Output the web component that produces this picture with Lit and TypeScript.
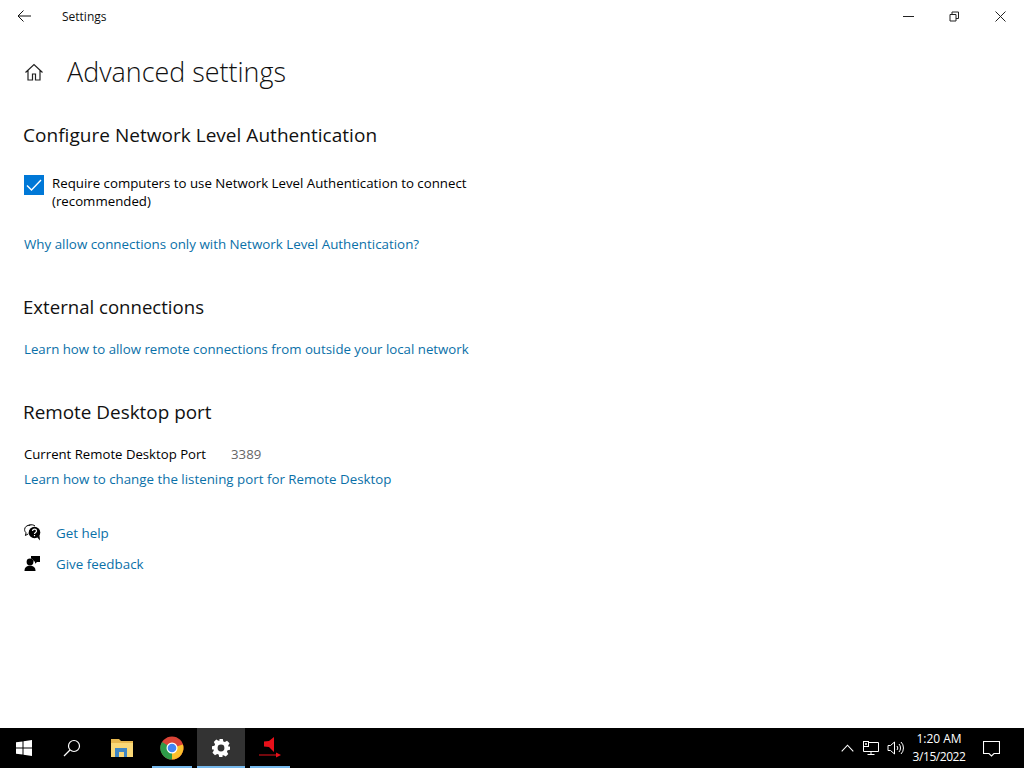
import { LitElement, html, css } from "lit";
import { customElement } from "lit/decorators.js";

@customElement("app-root")
export class AppRoot extends LitElement {
  static styles = css`
    :host { display: flex; flex-direction: column; width: 1024px; height: 768px; overflow: hidden; background: #fff; color: #000; font-family: "Open Sans", "Noto Sans", sans-serif; font-size: 14px; }
    svg { display: block; }
    .titlebar { display: flex; align-items: center; height: 32px; flex: none; }
    .back { width: 48px; display: flex; justify-content: center; }
    .apptitle { font-size: 12px; margin-left: 14px; color: #111; }
    .spacer { flex: 1; }
    .winbtns { display: flex; margin-right: 1px; }
    .winbtn { width: 46px; height: 32px; display: flex; align-items: center; justify-content: center; }
    .main { flex: 1; padding: 0 0 0 24px; min-height: 0; }
    .pagehead { display: flex; align-items: center; height: 48px; margin-top: 16px; }
    .home { width: 20px; margin-right: 23px; }
    h1 { font-weight: 300; font-size: 26.9px; margin: 0; line-height: 48px; color: #111; }
    h2 { font-weight: 400; font-size: 19px; margin: 0 0 0 -1px; line-height: 26px; color: #111; }
    .s1 { margin-top: 26px; letter-spacing: 0.03px; }
    .check { display: flex; margin-top: 26px; width: 470px; }
    .box { width: 20px; height: 20px; background: #0078d7; flex: none; margin: 1px 8px 0 0; }
    .checktext { font-size: 13.27px; line-height: 18px; }
    a { display: block; color: #0a70a8; font-size: 13.4px; line-height: 20px; text-decoration: none; white-space: nowrap; }
    .l1 { margin-top: 24px; font-size: 13.37px; }
    .s2 { margin-top: 40px; font-size: 18.6px; }
    .l2 { margin-top: 19px; font-size: 13.25px; }
    .s3 { margin-top: 40px; font-size: 18.9px; }
    .port { display: flex; margin-top: 19px; font-size: 13.18px; line-height: 20px; }
    .port span + span { margin-left: 25px; color: #666; }
    .l3 { margin-top: 5px; font-size: 13.33px; }
    .help { display: flex; align-items: center; height: 31px; }
    .help.first { margin-top: 28px; }
    .help svg { margin-right: 15px; width: 17px; height: 17px; }
    .taskbar { height: 40px; flex: none; background: #000; display: flex; align-items: stretch; }
    .tb { width: 48px; display: flex; align-items: center; justify-content: center; position: relative; flex: none; }
    .tb.mark::after { content: ""; position: absolute; left: 4px; right: 4px; bottom: 0; height: 2px; background: #76b9ed; }
    .tb.active { background: #333; margin-left: 1px; }
    .tb.active::after { left: 0; right: 0; }
    .folder { margin-left: 2px; }
    .chrome { margin-left: 2px; }
    .redapp { margin-left: 1px; }
    .tray { display: flex; align-items: center; color: #fff; }
    .clock { width: 56px; margin-left: 4px; text-align: center; font-size: 12px; line-height: 18px; color: #fff; white-space: nowrap; display: flex; flex-direction: column; align-items: center; }
    .date { letter-spacing: -0.45px; }
    .notif { width: 48px; display: flex; justify-content: center; margin-right: 9px; }
    .trayicon { width: 24px; display: flex; justify-content: center; }
  `;

  render() {
    return html`
      <div class="titlebar">
        <div class="back">
          <svg width="16" height="16" viewBox="0 0 16 16" fill="none" stroke="#111" stroke-width="1"><path d="M2 8h13M7.500 2.500 2 8l5.500 5.500"/></svg>
        </div>
        <div class="apptitle">Settings</div>
        <div class="spacer"></div>
        <div class="winbtns">
          <div class="winbtn"><svg width="11" height="11" viewBox="0 0 11 11" stroke="#222" fill="none"><path d="M0 5.500h11"/></svg></div>
          <div class="winbtn"><svg width="11" height="11" viewBox="0 0 11 11" stroke="#222" fill="none"><path d="M1 3.500h6v6.500H1zM3 3.500V1h6.500v6.500H7"/></svg></div>
          <div class="winbtn"><svg width="11" height="11" viewBox="0 0 11 11" stroke="#222" fill="none"><path d="M.5.500l10 10M10.500.500l-10 10"/></svg></div>
        </div>
      </div>
      <div class="main">
        <div class="pagehead">
          <div class="home"><svg width="20" height="20" viewBox="0 0 20 20" fill="none" stroke="#222" stroke-width="1.200"><path d="M1.500 10.500 10 2.500l8.500 8M4 8.500V18h4.500v-6h3v6H16V8.500"/></svg></div>
          <h1>Advanced settings</h1>
        </div>
        <h2 class="s1">Configure Network Level Authentication</h2>
        <div class="check">
          <div class="box"><svg width="20" height="20" viewBox="0 0 20 20" fill="none" stroke="#fff" stroke-width="1.400"><path d="M3 10.500l4.500 4.500L17 5"/></svg></div>
          <div class="checktext">Require computers to use Network Level Authentication to connect (recommended)</div>
        </div>
        <a class="l1" href="#">Why allow connections only with Network Level Authentication?</a>
        <h2 class="s2">External connections</h2>
        <a class="l2" href="#">Learn how to allow remote connections from outside your local network</a>
        <h2 class="s3">Remote Desktop port</h2>
        <div class="port"><span>Current Remote Desktop Port</span><span>3389</span></div>
        <a class="l3" href="#">Learn how to change the listening port for Remote Desktop</a>
        <div class="help first">
          <svg viewBox="0 0 17 17"><path d="M6.500 1C3 1 .6 3 .6 5.600c0 1.300.6 2.400 1.500 3.200L1.400 11.500l3-1.700" fill="none" stroke="#000"/><path d="M4.500 1.500C7 0 10 1 11 2" fill="none" stroke="#000"/><circle cx="10.500" cy="8.500" r="5.800" fill="#000"/><path d="M13 13l3 3.500-.5-5z" fill="#000"/><path d="M8.500 7c.2-2.400 4-2.400 4 0 0 1.500-2 1.500-2 3" fill="none" stroke="#fff" stroke-width="1.200"/><path d="M9.900 11h1.200v1.200H9.900z" fill="#fff"/></svg>
          <a href="#">Get help</a>
        </div>
        <div class="help">
          <svg viewBox="0 0 17 17"><circle cx="6" cy="7" r="3.400" fill="#000"/><path d="M.5 16c0-3.600 2.200-5.200 5.500-5.200s5.500 1.600 5.500 5.200z" fill="#000"/><path d="M7 1h9v6h-3l-2 1.800V6.500H9.600C9.400 5 8.500 4 7 3.600z" fill="#000"/></svg>
          <a href="#">Give feedback</a>
        </div>
      </div>
      <div class="taskbar">
        <div class="tb"><svg width="16" height="16" viewBox="0 0 16 16" fill="#fff"><path d="M0 2.300 6.500 1.400V7.500H0zM7.500 1.200 16 0V7.500H7.500zM0 8.500H6.500V14.600L0 13.700zM7.500 8.500H16V16L7.500 14.800z"/></svg></div>
        <div class="tb"><svg width="18" height="18" viewBox="0 0 18 18" fill="none" stroke="#fff" stroke-width="1.200"><circle cx="11" cy="7" r="5.500"/><path d="M7 11 1 17"/></svg></div>
        <div class="tb folder"><svg width="22" height="18" viewBox="0 0 22 18"><path d="M0 0h8l2 2h12v16H0z" fill="#e8b84f"/><path d="M0 4h22v14H0z" fill="#fad877"/><path d="M4 18V9h12v9h-3v-5H8v5z" fill="#3f86c4"/></svg></div>
        <div class="tb mark chrome"><svg width="24" height="24" viewBox="0 0 24 24"><circle cx="12" cy="12" r="11.500" fill="#db4437"/><path d="M12 12 22.900 8.500A11.500 11.500 0 0 1 12 23.500z" fill="#fbc02d"/><path d="M12 12 12 23.500A11.500 11.500 0 0 1 2 6z" fill="#2e9b49"/><circle cx="12" cy="12" r="5.500" fill="#fff"/><circle cx="12" cy="12" r="4.300" fill="#4285f4"/></svg></div>
        <div class="tb mark active"><svg width="18" height="18" viewBox="0 0 20 20"><path fill="#fff" fill-rule="evenodd" d="M8 0h4l.6 2.700 1.700.7 2.400-1.500 2.800 2.800-1.500 2.400.7 1.700L20 8v4l-2.700.6-.7 1.700 1.500 2.400-2.800 2.800-2.400-1.500-1.700.7L12 20H8l-.6-2.700-1.700-.7-2.400 1.500L.5 15.300 2 12.900l-.7-1.700L0 12V8l2.700-.6.7-1.700L2 3.300 4.700.5l2.400 1.500 1.700-.7zM10 6.200a3.800 3.800 0 1 0 0 7.600 3.800 3.800 0 0 0 0-7.600z"/></svg></div>
        <div class="tb mark redapp"><svg width="24" height="26" viewBox="0 0 24 26" fill="#e8101a"><path d="M16 2V17L11 12 6 11.500V6.500L11 6z"/><path d="M1 19.500h18v1H1z"/><path d="M18 17.500 23 20l-5 2.500z"/></svg></div>
        <div class="spacer"></div>
        <div class="tray">
          <div class="trayicon"><svg width="13" height="8" viewBox="0 0 13 8" fill="none" stroke="#fff" stroke-width="1.100"><path d="M.7 7.300 6.500 1.200l5.800 6.100"/></svg></div>
          <div class="trayicon"><svg width="16" height="16" viewBox="0 0 16 16" fill="none" stroke="#fff"><path d="M4.500 2.500h11v9H.5V7M8 11.500v3M4.500 14.500h7"/><rect x=".5" y="1.500" width="5" height="5" fill="#000"/><path d="M2.500 3.500h1v1h-1z"/></svg></div>
          <div class="trayicon"><svg width="17" height="16" viewBox="0 0 17 16" fill="none" stroke="#fff"><path d="M1 5.500h2.500L7.500 2v12L3.500 10.500H1zM10 6a3 3 0 0 1 0 4M12 4a6 6 0 0 1 0 8M14 2a8.500 8.500 0 0 1 0 12"/></svg></div>
          <div class="clock"><span>1:20 AM</span><span class="date">3/15/2022</span></div>
          <div class="notif"><svg width="17" height="17" viewBox="0 0 17 17" fill="none" stroke="#fff" stroke-width="1.100"><path d="M.5 1.500h16v12H11L8.500 16 6 13.500H.5z"/></svg></div>
        </div>
      </div>
    `;
  }
}
